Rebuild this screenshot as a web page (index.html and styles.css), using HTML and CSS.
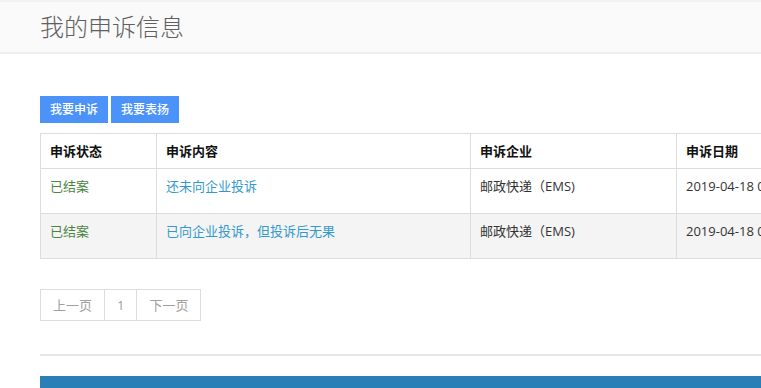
FILE: index.html
```html
<!DOCTYPE html>
<html lang="zh-CN">
<head>
<meta charset="utf-8">
<title>我的申诉信息</title>
<link rel="stylesheet" href="styles.css">
</head>
<body>
<header class="page-head">
  <h1 class="page-title">我的申诉信息</h1>
</header>
<main class="content">
  <div class="actions">
    <a class="btn" href="#">我要申诉</a>
    <a class="btn" href="#">我要表扬</a>
  </div>
  <table class="complaints">
    <colgroup>
      <col class="c-status">
      <col class="c-content">
      <col class="c-company">
      <col class="c-date">
    </colgroup>
    <thead>
      <tr><th>申诉状态</th><th>申诉内容</th><th>申诉企业</th><th>申诉日期</th></tr>
    </thead>
    <tbody>
      <tr>
        <td class="status">已结案</td>
        <td><a class="link" href="#">还未向企业投诉</a></td>
        <td>邮政快递（EMS)</td>
        <td>2019-04-18 09:21:36</td>
      </tr>
      <tr class="alt">
        <td class="status">已结案</td>
        <td><a class="link" href="#">已向企业投诉，但投诉后无果</a></td>
        <td>邮政快递（EMS)</td>
        <td>2019-04-18 09:18:52</td>
      </tr>
    </tbody>
  </table>
  <nav class="pager">
    <a class="page-item" href="#">上一页</a>
    <a class="page-item num" href="#">1</a>
    <a class="page-item" href="#">下一页</a>
  </nav>
  <hr class="divider">
  <div class="footer-bar"></div>
</main>
</body>
</html>
```
FILE: styles.css
```css
html, body {
  margin: 0;
  padding: 0;
  background: #fff;
  overflow: hidden;
}
body {
  font-family: "Open Sans", "Noto Sans CJK SC", sans-serif;
  font-size: 13px;
  color: #333;
  width: 761px;
  height: 388px;
}
a { text-decoration: none; }

.page-head {
  background: #fafafa;
  border-top: 2px solid #f2f2f2;
  border-bottom: 2px solid #eeeeee;
  height: 50px;
  box-sizing: content-box;
}
.page-title {
  margin: 0;
  padding: 11px 0 0 40px;
  font-size: 24px;
  line-height: 28px;
  font-weight: 300;
  color: #606060;
}

.content {
  padding-left: 40px;
  width: 1100px;
}

.actions {
  display: flex;
  gap: 3px;
  margin-top: 42px;
}
.btn {
  display: block;
  width: 68px;
  height: 27px;
  line-height: 27px;
  text-align: center;
  background: #4b93f8;
  color: #fff;
  font-size: 12px;
  font-weight: 500;
}

.complaints {
  margin-top: 10px;
  border-collapse: collapse;
  width: 1000px;
  table-layout: fixed;
}
.c-status { width: 116px; }
.c-content { width: 314px; }
.c-company { width: 206px; }
.complaints th, .complaints td {
  border: 1px solid #dddddd;
  padding: 0 9px;
  text-align: left;
  vertical-align: top;
  white-space: nowrap;
  overflow: hidden;
}
.complaints th {
  height: 34px;
  line-height: 34px;
  font-weight: bold;
  color: #111;
  font-size: 13px;
}
.complaints td {
  height: 45px;
  padding-top: 7px;
  padding-bottom: 0;
  line-height: 20px;
  box-sizing: border-box;
  color: #333;
  font-size: 13px;
}
.complaints tr.alt td { background: #f4f4f4; }
.complaints td.status { color: #4a8540; }
.link { color: #3399cc; }

.pager {
  display: flex;
  margin-top: 30px;
}
.page-item {
  display: block;
  height: 30px;
  line-height: 30px;
  border: 1px solid #dddddd;
  margin-left: -1px;
  padding: 0 12px;
  color: #a0a0a0;
  font-size: 13px;
}
.page-item:first-child { margin-left: 0; }
.page-item.num { padding: 0 12px; }

.divider {
  margin: 33px 0 0;
  border: 0;
  border-top: 2px solid #e6e6e6;
  height: 0;
}
.footer-bar {
  margin-top: 20px;
  height: 20px;
  background: #2b7fb7;
}
```
